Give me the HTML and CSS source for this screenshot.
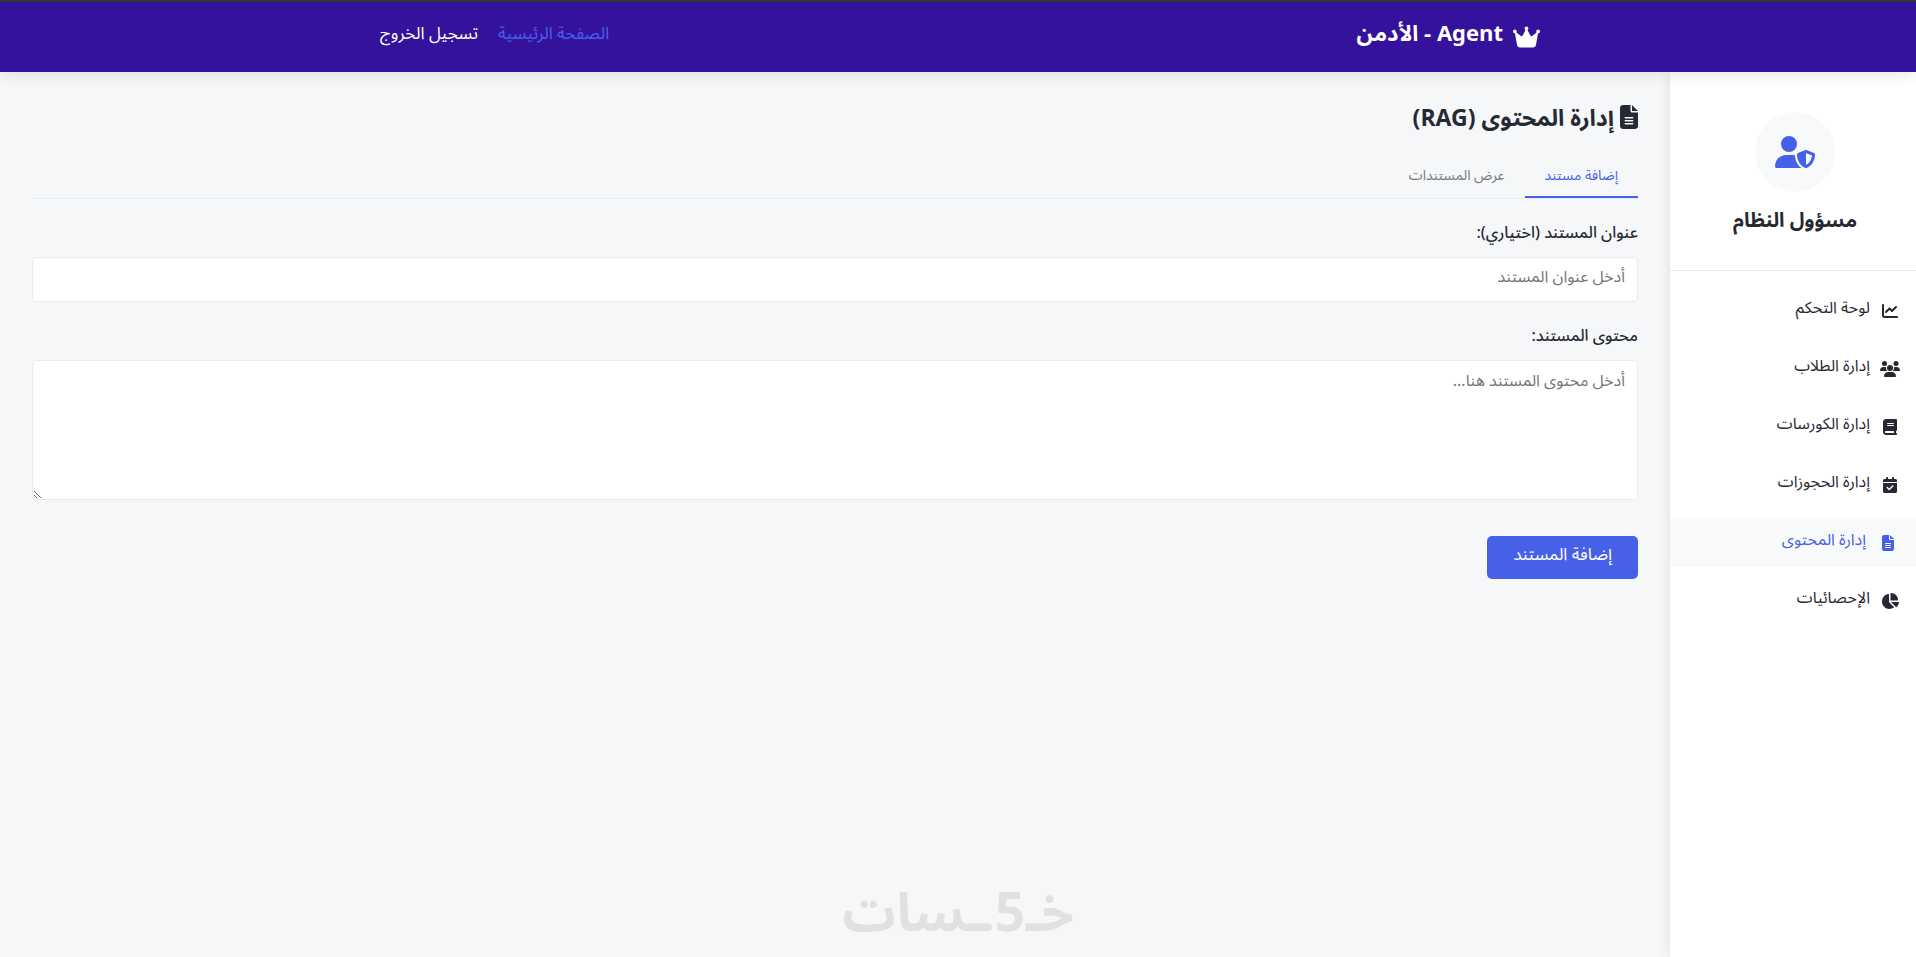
FILE: index.html
```html
<!DOCTYPE html>
<html lang="ar" dir="rtl">
<head>
<meta charset="utf-8">
<meta name="viewport" content="width=device-width, initial-scale=1">
<title>إدارة المحتوى (RAG)</title>
<link rel="stylesheet" href="styles.css">
</head>
<body>
<header class="header">
  <div class="container">
    <div class="brand">
      <svg class="crown" viewBox="0 0 576 512" aria-hidden="true"><path d="M309 106c11.400-7 19-19.700 19-34c0-22.100-17.900-40-40-40s-40 17.900-40 40c0 14.400 7.600 27 19 34L209.700 220.600c-9.100 18.200-32.700 23.400-48.600 10.700L72 160c5-6.700 8-15 8-24c0-22.100-17.900-40-40-40S0 113.900 0 136s17.900 40 40 40c.2 0 .5 0 .7 0L86.400 427.400c5.500 30.400 32 52.600 63 52.600H426.600c30.900 0 57.400-22.100 63-52.600L535.300 176c.2 0 .5 0 .7 0c22.100 0 40-17.900 40-40s-17.900-40-40-40s-40 17.900-40 40c0 9 3 17.300 8 24l-89.100 71.300c-15.900 12.700-39.500 7.500-48.600-10.700L309 106z"/></svg>
      <span>Agent - الأدمن</span>
    </div>
    <nav class="top-nav">
      <a class="top-link current" href="#home">الصفحة الرئيسية</a>
      <a class="top-link" href="#logout">تسجيل الخروج</a>
    </nav>
  </div>
</header>
<div class="layout">
  <aside class="sidebar">
    <div class="profile">
      <div class="avatar">
        <svg viewBox="0 0 640 512" aria-hidden="true"><path d="M224 256A128 128 0 1 0 224 0a128 128 0 1 0 0 256zm-45.700 48C79.800 304 0 383.800 0 482.300C0 498.700 13.300 512 29.700 512H418.300c1.800 0 3.500-.2 5.300-.5c-76.300-55.100-99.800-141-103.100-200.200c-16.100-4.800-33.100-7.300-50.700-7.300H178.300zm308.800-78.300l-120 48C358 277.400 352 286.200 352 296c0 63.300 25.900 168.800 134.800 214.200c5.900 2.500 12.600 2.500 18.500 0C614.100 464.800 640 359.300 640 296c0-9.800-6-18.600-15.100-22.300l-120-48c-5.700-2.300-12.100-2.300-17.800 0zM591.400 312c-3.900 50.700-27.200 116.700-95.400 149.700V273.800L591.400 312z"/></svg>
      </div>
      <h2 class="profile-name">مسؤول النظام</h2>
    </div>
    <nav class="menu">
      <a class="menu-item" href="#dashboard"><svg class="menu-icon" viewBox="0 0 512 512" aria-hidden="true"><path d="M64 64c0-17.700-14.300-32-32-32S0 46.300 0 64V400c0 44.200 35.800 80 80 80H480c17.700 0 32-14.300 32-32s-14.300-32-32-32H80c-8.800 0-16-7.200-16-16V64zm406.600 86.600c12.500-12.500 12.500-32.800 0-45.300s-32.800-12.500-45.300 0L320 210.700l-57.400-57.400c-12.500-12.500-32.800-12.500-45.300 0l-112 112c-12.500 12.500-12.500 32.800 0 45.300s32.800 12.500 45.300 0L240 221.300l57.400 57.400c12.500 12.500 32.800 12.500 45.300 0l128-128z"/></svg><span>لوحة التحكم</span></a>
      <a class="menu-item" href="#students"><svg class="menu-icon" viewBox="0 0 640 512" aria-hidden="true"><path d="M144 0a80 80 0 1 1 0 160A80 80 0 1 1 144 0zM512 0a80 80 0 1 1 0 160A80 80 0 1 1 512 0zM0 298.700C0 239.800 47.800 192 106.700 192h42.700c15.900 0 31 3.500 44.600 9.700c-1.300 7.200-1.900 14.700-1.900 22.300c0 38.200 16.800 72.500 43.300 96c-.2 0-.4 0-.7 0H21.300C9.600 320 0 310.400 0 298.700zM405.300 320c-.2 0-.4 0-.7 0c26.600-23.500 43.300-57.800 43.300-96c0-7.600-.7-15-1.900-22.300c13.600-6.300 28.700-9.700 44.600-9.700h42.700C592.200 192 640 239.800 640 298.700c0 11.800-9.600 21.300-21.300 21.300H405.300zM224 224a96 96 0 1 1 192 0 96 96 0 1 1 -192 0zM128 485.300C128 411.700 187.700 352 261.300 352H378.700C452.300 352 512 411.700 512 485.300c0 14.700-11.900 26.700-26.700 26.700H154.700c-14.700 0-26.700-11.900-26.700-26.700z"/></svg><span>إدارة الطلاب</span></a>
      <a class="menu-item" href="#courses"><svg class="menu-icon" viewBox="0 0 448 512" aria-hidden="true"><path d="M96 0C43 0 0 43 0 96V416c0 53 43 96 96 96H384h32c17.700 0 32-14.300 32-32s-14.300-32-32-32V384c17.700 0 32-14.300 32-32V32c0-17.700-14.300-32-32-32H384 96zm0 384H352v64H96c-17.700 0-32-14.300-32-32s14.300-32 32-32zm32-240c0-8.800 7.200-16 16-16H336c8.800 0 16 7.200 16 16s-7.200 16-16 16H144c-8.800 0-16-7.200-16-16zm16 48H336c8.800 0 16 7.200 16 16s-7.200 16-16 16H144c-8.800 0-16-7.200-16-16s7.200-16 16-16z"/></svg><span>إدارة الكورسات</span></a>
      <a class="menu-item" href="#bookings"><svg class="menu-icon" viewBox="0 0 448 512" aria-hidden="true"><path d="M128 0c17.700 0 32 14.300 32 32V64H288V32c0-17.700 14.300-32 32-32s32 14.300 32 32V64h48c26.500 0 48 21.500 48 48v48H0V112C0 85.500 21.500 64 48 64H96V32c0-17.700 14.300-32 32-32zM0 192H448V464c0 26.500-21.500 48-48 48H48c-26.500 0-48-21.500-48-48V192zM329 305c9.400-9.400 9.400-24.600 0-33.900s-24.600-9.400-33.900 0l-95 95-47-47c-9.400-9.400-24.600-9.400-33.900 0s-9.400 24.600 0 33.900l64 64c9.400 9.400 24.600 9.400 33.900 0L329 305z"/></svg><span>إدارة الحجوزات</span></a>
      <a class="menu-item active" href="#content" aria-current="page"><svg class="menu-icon" viewBox="0 0 384 512" aria-hidden="true"><path d="M64 0C28.700 0 0 28.700 0 64V448c0 35.300 28.700 64 64 64H320c35.300 0 64-28.700 64-64V160H256c-17.700 0-32-14.300-32-32V0H64zM256 0V128H384L256 0zM112 256H272c8.800 0 16 7.200 16 16s-7.200 16-16 16H112c-8.800 0-16-7.200-16-16s7.200-16 16-16zm0 64H272c8.800 0 16 7.200 16 16s-7.200 16-16 16H112c-8.800 0-16-7.200-16-16s7.200-16 16-16zm0 64H272c8.800 0 16 7.200 16 16s-7.200 16-16 16H112c-8.800 0-16-7.200-16-16s7.200-16 16-16z"/></svg><span>إدارة المحتوى</span></a>
      <a class="menu-item" href="#stats"><svg class="menu-icon" viewBox="0 0 576 512" aria-hidden="true"><path d="M304 240V16.600c0-9 7-16.600 16-16.600C443.700 0 544 100.300 544 224c0 9-7.600 16-16.600 16H304zM32 272C32 150.700 122.100 50.300 239 34.300c9.200-1.300 17 6.100 17 15.400V288L412.500 444.500c6.700 6.700 6.200 17.700-1.500 23.100C371.800 495.600 323.800 512 272 512C139.500 512 32 404.600 32 272zm526.400 16c9.300 0 16.600 7.800 15.400 17c-7.700 55.900-34.600 105.600-73.900 142.300c-6 5.600-15.400 5.200-21.200-.7L320 288H558.400z"/></svg><span>الإحصائيات</span></a>
    </nav>
  </aside>
  <main class="main">
    <h1 class="page-title">
      <svg class="title-icon" viewBox="0 0 384 512" aria-hidden="true"><path d="M64 0C28.700 0 0 28.700 0 64V448c0 35.300 28.700 64 64 64H320c35.300 0 64-28.700 64-64V160H256c-17.700 0-32-14.300-32-32V0H64zM256 0V128H384L256 0zM112 256H272c8.800 0 16 7.200 16 16s-7.200 16-16 16H112c-8.800 0-16-7.200-16-16s7.200-16 16-16zm0 64H272c8.800 0 16 7.200 16 16s-7.200 16-16 16H112c-8.800 0-16-7.200-16-16s7.200-16 16-16zm0 64H272c8.800 0 16 7.200 16 16s-7.200 16-16 16H112c-8.800 0-16-7.200-16-16s7.200-16 16-16z"/></svg>
      <span>إدارة المحتوى (RAG)</span>
    </h1>
    <div class="tabs" role="tablist">
      <button class="tab selected" type="button" role="tab" aria-selected="true">إضافة مستند</button>
      <button class="tab" type="button" role="tab" aria-selected="false">عرض المستندات</button>
    </div>
    <form class="form">
      <div class="field">
        <label class="label" for="doc-title">عنوان المستند (اختياري):</label>
        <input class="control" id="doc-title" type="text" placeholder="أدخل عنوان المستند">
      </div>
      <div class="field">
        <label class="label" for="doc-body">محتوى المستند:</label>
        <textarea class="control area" id="doc-body" placeholder="أدخل محتوى المستند هنا..."></textarea>
      </div>
      <button class="submit" type="submit">إضافة المستند</button>
    </form>
  </main>
</div>
<div class="watermark">خـ5ـسات</div>
</body>
</html>
```
FILE: styles.css
```css
* { box-sizing: border-box; }

body {
  margin: 0;
  min-height: 100vh;
  display: flex;
  flex-direction: column;
  background: #f5f7f9;
  color: #272932;
  font-family: "Noto Sans Arabic", "Noto Sans", "DejaVu Sans", sans-serif;
  font-size: 16px;
  line-height: 24px;
}

button, input, textarea { font: inherit; }
a { color: inherit; text-decoration: none; }
svg { display: block; fill: currentColor; flex: none; }

.header {
  position: relative;
  z-index: 2;
  height: 72px;
  padding-left: 4px;
  background: #34129b;
  border-top: 2px solid #36363f;
  box-shadow: 0 2px 15px rgba(0, 0, 0, 0.1);
  color: #fff;
}

.container {
  max-width: 1200px;
  height: 100%;
  margin: 0 auto;
  padding: 0 20px;
  display: flex;
  align-items: center;
  justify-content: space-between;
}

.brand {
  display: flex;
  align-items: center;
  gap: 10px;
  font-size: 22px;
  font-weight: 700;
}

.brand span { padding-bottom: 6px; }
.crown { width: 27px; height: 24px; }
.top-nav { display: flex; gap: 20px; padding-bottom: 6px; font-size: 17px; }
.top-link.current { color: #4661e8; }

.layout { flex: 1; display: flex; }

.sidebar {
  width: 246px;
  flex: none;
  background: #fff;
  box-shadow: 0 0 12px rgba(0, 0, 0, 0.1);
}

.profile {
  display: flex;
  flex-direction: column;
  align-items: center;
  gap: 18px;
  padding: 40px 16px 38px 20px;
  border-bottom: 1px solid #e9ecef;
}

.avatar {
  width: 80px;
  height: 80px;
  display: grid;
  place-items: center;
  border-radius: 50%;
  background: #f8f9fa;
  color: #4661e8;
}

.avatar svg { width: 40px; height: 32px; }
.profile-name { margin: 0; font-size: 20px; line-height: 22px; }

.menu { display: flex; flex-direction: column; gap: 9px; padding-top: 15px; }

.menu-item {
  height: 49px;
  display: flex;
  align-items: center;
  gap: 10px;
  padding: 0 16px;
}

.menu-item span { padding-bottom: 6px; }
.menu-icon { width: 20px; height: 16px; }
.menu-item.active { background: #f8f9fa; color: #4661e8; }
.menu-item.active .menu-icon { width: 24px; }

.main { flex: 1; min-width: 0; padding: 32px; }

.page-title {
  display: flex;
  align-items: flex-start;
  gap: 6px;
  margin: 0 0 24px;
  font-size: 23px;
  line-height: 30px;
}

.title-icon { width: 18px; height: 24px; margin-top: 1px; }

.tabs { display: flex; border-bottom: 1px solid #e9ecef; }

.tab {
  height: 40px;
  padding: 0 20px 2px;
  border: 0;
  border-bottom: 2px solid transparent;
  background: none;
  color: #777a80;
  font-size: 14px;
}

.tab.selected { border-bottom-color: #4661e8; color: #4661e8; }

.form { padding-top: 20px; }
.field { display: flex; flex-direction: column; gap: 10px; margin-bottom: 20px; }
.label { font-weight: 500; line-height: 28px; }

.control {
  width: 100%;
  height: 45px;
  padding: 6px 12px 12px;
  border: 1px solid #e9ecef;
  border-radius: 4px;
  background: #fff;
  color: #272932;
}

.control::placeholder { color: #757575; }
.area { display: block; height: 140px; padding-top: 8px; resize: vertical; }

.submit {
  height: 43px;
  margin-top: 16px;
  padding: 0 26px 6px;
  border: 0;
  border-radius: 5px;
  background: #4661e8;
  color: #fff;
  font-size: 17px;
}

.watermark {
  position: fixed;
  bottom: 0;
  left: 50%;
  transform: translateX(-50%);
  color: #e0e1e3;
  font-size: 53px;
  font-weight: 700;
  line-height: 86px;
  white-space: nowrap;
  pointer-events: none;
}
```
